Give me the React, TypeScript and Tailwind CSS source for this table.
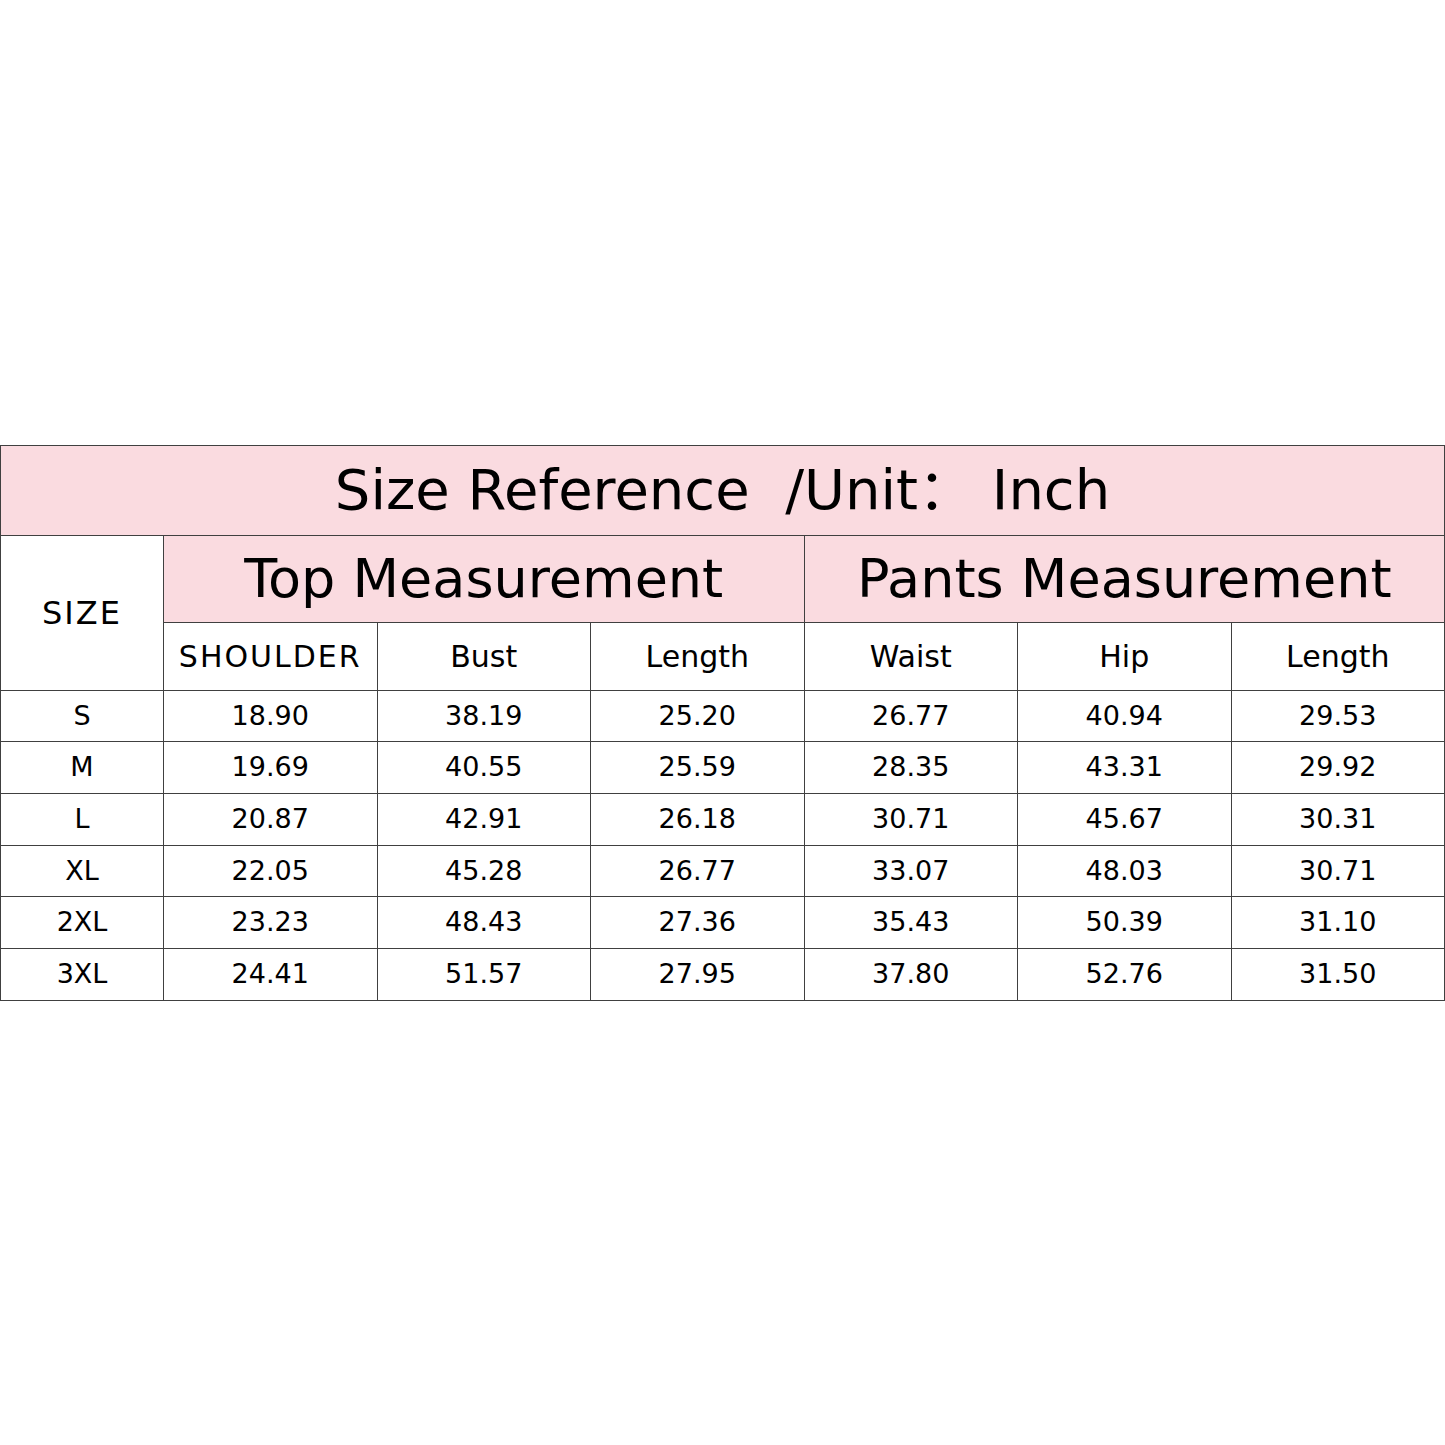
import React from "react";

const rows: string[][] = [
  ["S", "18.90", "38.19", "25.20", "26.77", "40.94", "29.53"],
  ["M", "19.69", "40.55", "25.59", "28.35", "43.31", "29.92"],
  ["L", "20.87", "42.91", "26.18", "30.71", "45.67", "30.31"],
  ["XL", "22.05", "45.28", "26.77", "33.07", "48.03", "30.71"],
  ["2XL", "23.23", "48.43", "27.36", "35.43", "50.39", "31.10"],
  ["3XL", "24.41", "51.57", "27.95", "37.80", "52.76", "31.50"],
];

const subs = ["SHOULDER", "Bust", "Length", "Waist", "Hip", "Length"];

export default function App() {
  return (
    <div
      className="w-[1445px] h-[1445px] bg-white flex flex-col justify-center text-black"
      style={{ fontFamily: '"Comic Sans MS", "DejaVu Sans", "Noto Sans CJK SC", sans-serif' }}
    >
      <div className="grid grid-cols-[162px_repeat(6,1fr)] grid-rows-[89px_86px_67px_repeat(6,1fr)] h-[556px] w-[1445px] gap-px p-px bg-[#404040]">
        <div className="col-span-7 bg-[#fadbe0] flex items-center justify-center text-[56px] whitespace-pre leading-none">
          Size Reference  /Unit： Inch
        </div>
        <div className="row-span-2 bg-white flex items-center justify-center text-[32px] tracking-[2px]">
          SIZE
        </div>
        <div className="col-span-3 bg-[#fadbe0] flex items-center justify-center text-[54px] leading-none">
          Top Measurement
        </div>
        <div className="col-span-3 bg-[#fadbe0] flex items-center justify-center text-[54px] leading-none">
          Pants Measurement
        </div>
        {subs.map((s, i) => (
          <div
            key={i}
            className={
              i === 0
                ? "bg-white flex items-center justify-center text-[30px] tracking-[2px]"
                : "bg-white flex items-center justify-center text-[30px]"
            }
          >
            {s}
          </div>
        ))}
        {rows.map((r, ri) =>
          r.map((c, ci) => (
            <div key={ri + "-" + ci} className="bg-white flex items-center justify-center text-[27px]">
              {c}
            </div>
          ))
        )}
      </div>
    </div>
  );
}
